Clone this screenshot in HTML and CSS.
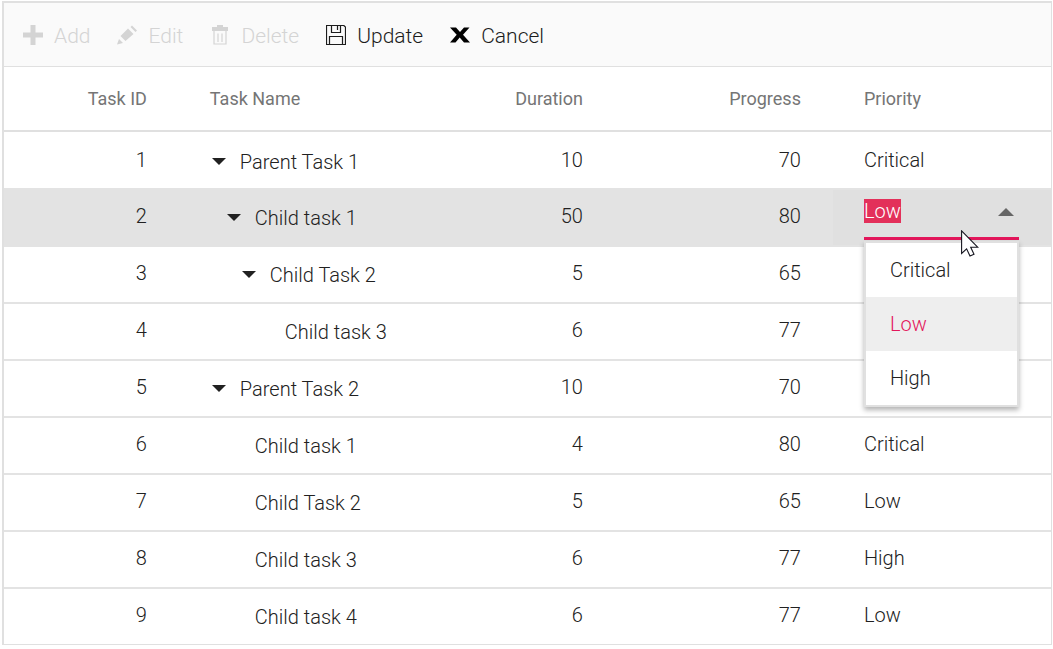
FILE: index.html
```html
<!DOCTYPE html>
<html lang="en">
<head>
<meta charset="utf-8">
<title>Task grid</title>
<link rel="stylesheet" href="styles.css">
</head>
<body>
<main class="grid">
  <div class="toolbar" role="toolbar" aria-label="Grid actions">
    <button class="tool" type="button" disabled>
      <svg class="icon" viewBox="0 0 20 20" aria-hidden="true"><path d="M7.500 0h5v7.500H20v5h-7.500V20h-5v-7.500H0v-5h7.500z"/></svg>
      Add
    </button>
    <button class="tool" type="button" disabled>
      <svg class="icon" viewBox="0 0 20 20" aria-hidden="true"><path d="M11 3.500l5.500 5.500-8 7L3.500 11zM13.500 2l1.500-1.500 5 5-1.500 1.500zM2 14l4 4-6 1.500z"/></svg>
      Edit
    </button>
    <button class="tool" type="button" disabled>
      <svg class="icon icon-narrow" viewBox="0 0 16 20" aria-hidden="true"><path d="M5 0h6v2h5v4H0V2h5z"/><path d="M2 6v13h12V6M6 8.500V17M10 8.500V17" fill="none" stroke="currentColor" stroke-width="1.200"/></svg>
      Delete
    </button>
    <button class="tool" type="button">
      <svg class="icon" viewBox="0 0 20 20" aria-hidden="true"><path d="M.5.500h17.300l1.700 1.700v17.300H.5zM5.500 1v6.500h9V1M11.500 1v4M3.500 19v-7.500h13V19" fill="none" stroke="currentColor" stroke-width="1.200"/></svg>
      Update
    </button>
    <button class="tool" type="button">
      <svg class="icon" viewBox="0 0 20 20" aria-hidden="true"><path d="M0 2.500h6l4 4.500 4-4.500h5.500L13 9.700l7 7.800h-6l-4.300-5-4.200 5H0l6.700-7.800z" fill="#000"/></svg>
      Cancel
    </button>
  </div>
  <table class="tasks">
    <colgroup><col class="col-id"><col><col><col><col></colgroup>
    <thead>
      <tr><th class="num" scope="col">Task ID</th><th scope="col">Task Name</th><th class="num" scope="col">Duration</th><th class="num" scope="col">Progress</th><th scope="col">Priority</th></tr>
    </thead>
    <tbody>
      <tr><td class="num">1</td><td><div class="node"><span class="twist open"></span>Parent Task 1</div></td><td class="num">10</td><td class="num">70</td><td>Critical</td></tr>
      <tr class="editing"><td class="num">2</td><td><div class="node level-1"><span class="twist open"></span>Child task 1</div></td><td class="num">50</td><td class="num">80</td>
        <td class="edit-cell">
          <div class="combo">
            <input class="combo-input" type="text" value="Low" role="combobox" aria-label="Priority" aria-expanded="true" aria-controls="priority-list">
            <span class="combo-arrow"></span>
            <ul class="popup" id="priority-list" role="listbox" aria-label="Priority">
              <li role="option">Critical</li>
              <li class="chosen" role="option" aria-selected="true">Low</li>
              <li role="option">High</li>
            </ul>
            <svg class="pointer" viewBox="0 0 18 28" aria-hidden="true"><path d="M.6.900v22.600l5-4.700 3.400 7.300 4-1.800-3.300-7h7.200z" fill="#fff" stroke="#15151f" stroke-width="1.100"/></svg>
          </div>
        </td></tr>
      <tr><td class="num">3</td><td><div class="node level-2"><span class="twist open"></span>Child Task 2</div></td><td class="num">5</td><td class="num">65</td><td></td></tr>
      <tr><td class="num">4</td><td><div class="node level-3"><span class="twist"></span>Child task 3</div></td><td class="num">6</td><td class="num">77</td><td></td></tr>
      <tr><td class="num">5</td><td><div class="node"><span class="twist open"></span>Parent Task 2</div></td><td class="num">10</td><td class="num">70</td><td></td></tr>
      <tr><td class="num">6</td><td><div class="node level-1"><span class="twist"></span>Child task 1</div></td><td class="num">4</td><td class="num">80</td><td>Critical</td></tr>
      <tr><td class="num">7</td><td><div class="node level-1"><span class="twist"></span>Child Task 2</div></td><td class="num">5</td><td class="num">65</td><td>Low</td></tr>
      <tr><td class="num">8</td><td><div class="node level-1"><span class="twist"></span>Child task 3</div></td><td class="num">6</td><td class="num">77</td><td>High</td></tr>
      <tr><td class="num">9</td><td><div class="node level-1"><span class="twist"></span>Child task 4</div></td><td class="num">6</td><td class="num">77</td><td>Low</td></tr>
    </tbody>
  </table>
</main>
<script src="grid.js"></script>
</body>
</html>
```
FILE: grid.js
```js
const field = document.querySelector(".combo-input");
field.focus({ preventScroll: true });
field.select();
```
FILE: styles.css
```css
* { box-sizing: border-box; }

body {
  margin: 0;
  padding: 1px 1px 0 2px;
  background: #fff;
  color: #212121;
  font: 350 20px/24px Roboto, sans-serif;
}

.grid {
  border: 1px solid #e0e0e0;
  border-top-width: 2px;
  border-left-width: 2px;
}

.toolbar {
  display: flex;
  align-items: center;
  gap: 27px;
  height: 64px;
  padding: 0 19px;
  background: #fafafa;
  border-bottom: 1px solid #e0e0e0;
}

.tool {
  display: flex;
  align-items: center;
  gap: 11px;
  padding: 2px 0 0;
  border: 0;
  background: none;
  color: #1c1c1c;
  font: inherit;
  font-size: 21px;
}

.tool:disabled { color: #d4d4d4; }

.icon {
  width: 20px;
  height: 20px;
  margin-bottom: 2px;
  fill: currentColor;
}

.icon-narrow { width: 16px; margin: 0 2px 2px 2px; }

.tasks {
  width: 100%;
  table-layout: fixed;
  border-collapse: separate;
  border-spacing: 0;
}

.col-id { width: 16.7%; }

th, td {
  padding: 0 32px 0 31px;
  text-align: left;
  white-space: nowrap;
}

th {
  height: 65px;
  border-bottom: 2px solid #e0e0e0;
  color: #757575;
  font-size: 18px;
  font-weight: 450;
}

td {
  height: 57px;
  padding-bottom: 4px;
  border-top: 2px solid #e3e3e3;
}

tbody tr:first-child td {
  height: 56px;
  padding-bottom: 1px;
  border-top: 0;
}

.num { text-align: right; }

.node {
  display: flex;
  align-items: center;
  padding-top: 4px;
}

.level-1 { padding-left: 15px; }
.level-2 { padding-left: 30px; }
.level-3 { padding-left: 45px; }

.twist { flex: none; width: 30px; }

.open::before {
  content: "";
  display: block;
  width: 0;
  margin-left: 2px;
  border: 7px solid transparent;
  border-top-color: #212121;
  border-bottom: 0;
}

.editing td {
  background: #e3e3e3;
}

.editing .edit-cell {
  padding-bottom: 5px;
  background: #e0e0e0;
  vertical-align: bottom;
}

.combo {
  position: relative;
  display: flex;
  align-items: center;
  height: 43px;
  padding-bottom: 12px;
  border-bottom: 3px solid #e3165b;
}

.combo-input {
  flex: 1;
  min-width: 0;
  padding: 0;
  border: 0;
  outline: 0;
  background: none;
  color: inherit;
  font: inherit;
}

.combo-input::selection { background: #e3305a; color: #fff; }

.combo-arrow {
  width: 0;
  margin: 2px 5px 0;
  border: 8px solid transparent;
  border-bottom-color: #666;
  border-top: 0;
}

.popup {
  position: absolute;
  z-index: 1;
  top: 100%;
  left: 0;
  right: 0;
  margin: 4px 0 0;
  padding: 0;
  border: 2px solid #e0e0e0;
  background: #fff;
  box-shadow: 0 3px 5px rgba(0, 0, 0, .3);
  color: #212121;
  list-style: none;
}

.popup li { padding: 0 24px; line-height: 54px; }

.popup .chosen { background: #eee; color: #e3165b; }

.pointer {
  position: absolute;
  z-index: 2;
  top: 33px;
  right: 40px;
  width: 18px;
  height: 28px;
}
```
